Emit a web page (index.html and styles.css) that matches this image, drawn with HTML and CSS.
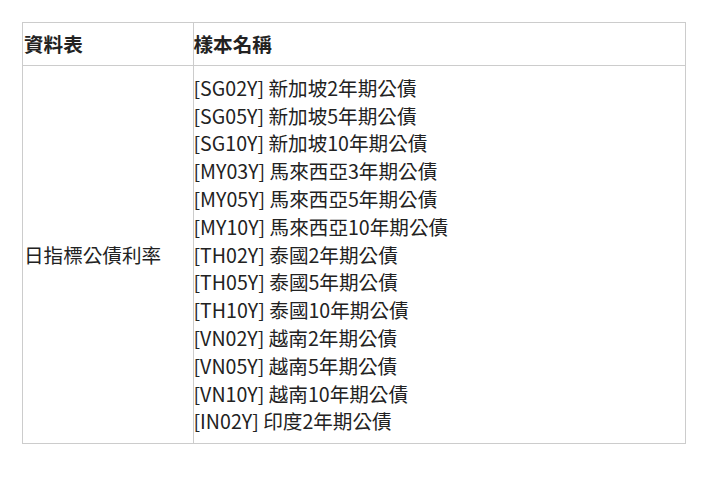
FILE: index.html
```html
<!DOCTYPE html>
<html lang="zh-Hant">
<head>
<meta charset="utf-8">
<link rel="stylesheet" href="styles.css">
</head>
<body>
<div class="page">
<table class="data">
<thead>
<tr><th class="c1">資料表</th><th class="c2">樣本名稱</th></tr>
</thead>
<tbody>
<tr>
<td class="c1">日指標公債利率</td>
<td class="c2">
<div>[SG02Y] 新加坡2年期公債</div>
<div>[SG05Y] 新加坡5年期公債</div>
<div>[SG10Y] 新加坡10年期公債</div>
<div>[MY03Y] 馬來西亞3年期公債</div>
<div>[MY05Y] 馬來西亞5年期公債</div>
<div>[MY10Y] 馬來西亞10年期公債</div>
<div>[TH02Y] 泰國2年期公債</div>
<div>[TH05Y] 泰國5年期公債</div>
<div>[TH10Y] 泰國10年期公債</div>
<div>[VN02Y] 越南2年期公債</div>
<div>[VN05Y] 越南5年期公債</div>
<div>[VN10Y] 越南10年期公債</div>
<div>[IN02Y] 印度2年期公債</div>
</td>
</tr>
</tbody>
</table>
</div>
</body>
</html>
```
FILE: styles.css
```css
html, body { margin: 0; padding: 0; background: #fff; }
.page { padding: 22px 0 0 22px; }
.data {
  border-collapse: collapse;
  width: 664px;
  font-family: "Noto Sans CJK TC", "Open Sans", sans-serif;
  font-size: 19.6px;
  line-height: 27.8px;
  color: #222;
}
.data th, .data td {
  border: 1px solid #ccc;
  padding: 8px 1px 8px 1px;
  text-align: left;
}
.data th { font-weight: bold; padding: 7px 1px 7px 1px; }
.data .c1 { width: 167.5px; vertical-align: middle; }
.data .c2 { vertical-align: top; padding-left: 0; }
```
